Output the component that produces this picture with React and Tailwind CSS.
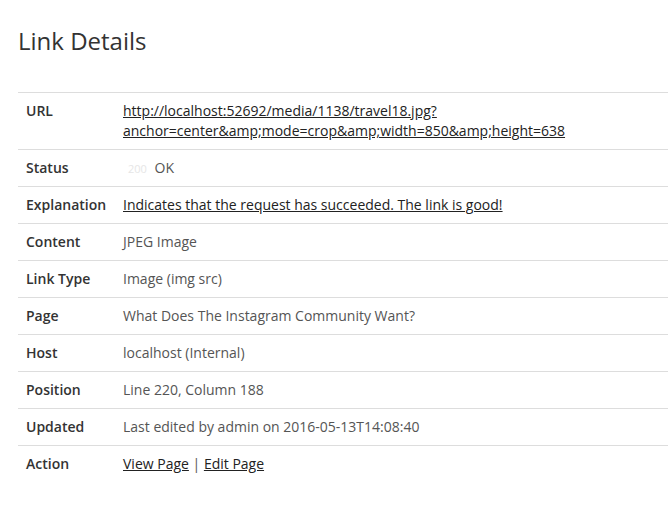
const rows = [
  {
    label: "URL",
    value: (
      <a href="#" className="underline text-[#222]">
        http://localhost:52692/media/1138/travel18.jpg?
        <br />
        anchor=center&amp;amp;mode=crop&amp;amp;width=850&amp;amp;height=638
      </a>
    ),
  },
  {
    label: "Status",
    value: (
      <span>
        <span className="text-[11px] leading-none text-[#e6e6e6] ml-[5px] mr-[4px]">200</span> OK
      </span>
    ),
  },
  {
    label: "Explanation",
    value: (
      <a href="#" className="underline text-[#222]">
        Indicates that the request has succeeded. The link is good!
      </a>
    ),
  },
  { label: "Content", value: "JPEG Image" },
  { label: "Link Type", value: "Image (img src)" },
  { label: "Page", value: "What Does The Instagram Community Want?" },
  { label: "Host", value: "localhost (Internal)" },
  { label: "Position", value: "Line 220, Column 188" },
  { label: "Updated", value: "Last edited by admin on 2016-05-13T14:08:40" },
  {
    label: "Action",
    value: (
      <span>
        <a href="#" className="underline text-[#222]">View Page</a> |{" "}
        <a href="#" className="underline text-[#222]">Edit Page</a>
      </span>
    ),
  },
];

export default function App() {
  return (
    <div className="bg-white min-h-[520px] pl-[18px] pr-px pt-[25px] font-['Open_Sans',sans-serif] text-[14px] leading-5">
      <h1 className="text-[24px] leading-8 text-[#333] mb-[35px]">Link Details</h1>
      <table className="w-full border-collapse">
        <tbody>
          {rows.map((r) => (
            <tr key={r.label} className="border-t border-[#ddd]">
              <td className="w-[97px] px-2 py-2 align-top font-semibold text-[#333]">{r.label}</td>
              <td className="px-2 py-2 align-top text-[#555]">{r.value}</td>
            </tr>
          ))}
        </tbody>
      </table>
    </div>
  );
}
